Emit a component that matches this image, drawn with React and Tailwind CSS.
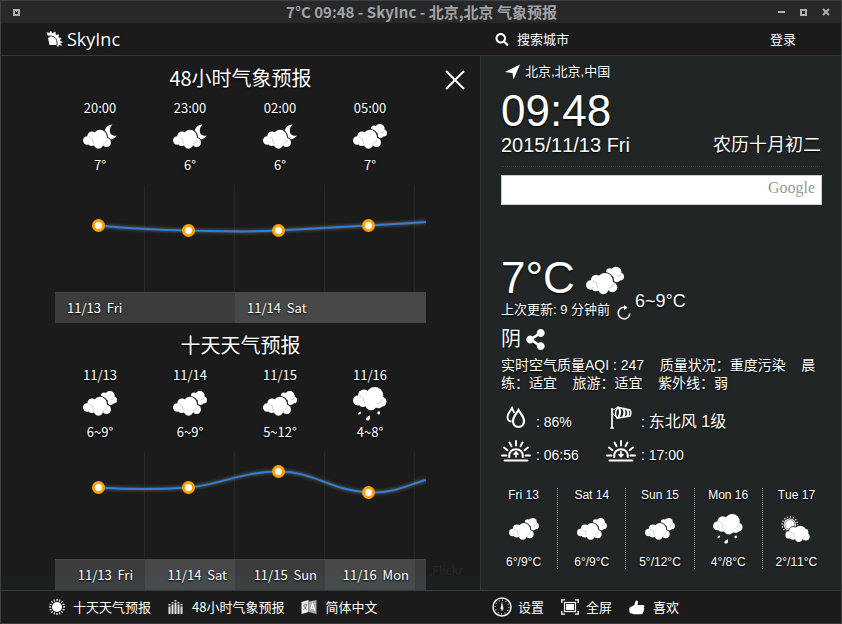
import React from "react";
import { FaSearch, FaShareAlt } from "react-icons/fa";

const CJK = "font-['Noto_Sans_CJK_SC',sans-serif]";
const LATIN = "font-['Liberation_Sans','Noto_Sans_CJK_SC',sans-serif] [font-kerning:none]";
const SHADOW = "[text-shadow:0_1px_2px_#000]";

/* ---------- weather icons ---------- */

function CloudBody({ bg }) {
  const lobes = (
    <>
      <circle cx="23.5" cy="18.5" r="4.5" />
      <circle cx="4.2" cy="16.5" r="4.200" />
      <circle cx="9" cy="12" r="4.600" />
      <circle cx="8.8" cy="18.500" r="3.600" />
      <ellipse cx="15.500" cy="18.800" rx="5" ry="6" />
      <ellipse cx="17" cy="13" rx="7" ry="7.200" />
    </>
  );
  return (
    <>
      <g fill={bg} stroke={bg} strokeWidth="1.800">{lobes}</g>
      <g fill="#fff">{lobes}</g>
      <circle cx="22.500" cy="15.500" r="2.500" fill="#fff" />
      <g fill="none" stroke="#9a9a9a" strokeWidth="0.500">
        <path d="M6 12.500c.6 1.200 1.700 1.800 3 1.800M9.500 14.500c.2 2 .4 4 1.500 5.500M24 15.500c-.2 2-1.700 3.500-3.700 4M20.500 20.500l.6 1.500M5.500 19.500l1-1.200" />
      </g>
    </>
  );
}

function WeatherIcon({ kind, bg = "#1b1b1b", className }) {
  if (kind === "rain") {
    return (
      <svg viewBox="0 0 34 34" className={className} aria-hidden="true">
        <g fill="#fff">
          <circle cx="5" cy="13.500" r="5" />
          <circle cx="11" cy="8.500" r="6" />
          <circle cx="10" cy="15.500" r="4.500" />
          <ellipse cx="18" cy="15.500" rx="6.500" ry="7.800" />
          <circle cx="21.800" cy="8.500" r="8.500" />
          <circle cx="28.500" cy="14.800" r="5" />
          <circle cx="25.500" cy="17.500" r="3.800" />
          <path d="M7.800 24.500c.3 1.500 0 3-1.500 3-1.800 0-1.700-2 1.500-3zM16.800 28.500c.6 2.200.2 5-2 5-2.800 0-2.600-3.200 2-5zM24.500 24.800l2.300-.5c.5 1.400.2 3.200-1 3.200-1.300 0-1.800-1.300-1.300-2.700z" />
        </g>
        <path
          d="M6.500 8c.8 1.600 2 2.200 3.500 2.200M10.500 11c.2 2.500.6 5 2 6.500M29 12c-.8 2.500-2.500 4.200-5 4.700M6.500 17l1-1"
          fill="none"
          stroke="#9a9a9a"
          strokeWidth="0.500"
        />
      </svg>
    );
  }
  if (kind === "sunny") {
    return (
      <svg viewBox="0 0 34 29" className={className} aria-hidden="true">
        <circle cx="10" cy="9.500" r="8.700" fill="none" stroke="#fff" strokeWidth="1.600" strokeDasharray="1.300 2.100" />
        <circle cx="10" cy="9.500" r="7" fill="#fff" />
        <circle cx="10" cy="9.500" r="5.600" fill="none" stroke="#555" strokeWidth="0.800" />
        <g transform="translate(5 5) scale(.98)">
          <CloudBody bg={bg} />
          <circle cx="22.500" cy="13.500" r="4" fill="#fff" />
        </g>
      </svg>
    );
  }
  return (
    <svg viewBox="0 0 34 25" className={className} aria-hidden="true">
      {kind === "night" ? (
        <path d="M29.500.5C25.500.5 21.500 4 21.500 8.500c1.500 0 4 4 3.500 6.500 3.500 1.200 7-.5 9-3.500-4.500.8-7.200-1.300-7.200-4.800 0-2.500 1-4.500 2.700-6.200z" fill="#fff" />
      ) : (
        <g fill="#fff">
          <circle cx="21" cy="4.500" r="3" />
          <circle cx="26.800" cy="5" r="4.900" />
          <circle cx="30.500" cy="9" r="3.500" />
          <circle cx="27.500" cy="11" r="3" />
          <path d="M28 8.500c1.500 0 3-.5 3.600-1.700" fill="none" stroke="#9a9a9a" strokeWidth="0.600" />
        </g>
      )}
      <CloudBody bg={bg} />
    </svg>
  );
}

/* ---------- interface icons ---------- */

function LogoMark() {
  return (
    <svg viewBox="0 0 18 18" className="h-[18px] w-[18px]" aria-hidden="true">
      <path d="M2 8c3-2 6.500-1.500 8 .5 1.300 2 1 4.500 0 6.500L3.500 15z" fill="#fff" />
      <path d="M1.500 5C7 3 13.500 6 12.500 15" fill="none" stroke="#fff" strokeWidth="1.800" />
      <path d="M1.500 4 .5 2l2.700 1L5 .8l1.200 2.400L9.500 1.500 9.800 5 13 4.200 12.500 7.500l3 .5-1.700 2.500L17 12.500l-3 .5 2.500 2.800-3.500-.8-1 2.200-1.300-2" fill="#fff" />
      <path d="M1.500 6.700C7 4.500 12 8 11 15" fill="none" stroke="#1b1b1b" strokeWidth="0.900" />
    </svg>
  );
}

function SunIcon() {
  const rays = Array.from({ length: 16 }, (_, i) => i * 22.5);
  return (
    <svg viewBox="0 0 16 16" className="h-4 w-4" fill="#fff" aria-hidden="true">
      <circle cx="8" cy="8" r="5" />
      {rays.map((a) => (
        <rect key={a} x="7.400" y="0" width="1.200" height="2" transform={`rotate(${a} 8 8)`} />
      ))}
    </svg>
  );
}

function BarsIcon() {
  const bars = [[0.5, 6], [3.500, 4], [6.500, 2], [9.500, 4], [12.500, 6]];
  return (
    <svg viewBox="0 0 16 16" className="h-4 w-4" fill="#e4e4e4" aria-hidden="true">
      {bars.map(([x, y]) => (
        <g key={x}>
          <rect x={x} y={y + 1.500} width="2" height={13.500 - y} />
          <rect x={x} y={y - 1} width="2" height="1.400" />
        </g>
      ))}
    </svg>
  );
}

function TranslateIcon() {
  return (
    <svg viewBox="0 0 16 16" className="h-4 w-4" aria-hidden="true">
      <path d="M.5 3 7.500 1v12L.5 15z" fill="#eee" />
      <path d="M7.500 2.500 15.500 1v14L7.500 13z" fill="#aaa" />
      <path d="M2 6.500 6 5.500M4 4.500v1.500M5.500 6c-.5 2.500-1.500 4-3.300 5M2.700 7c.6 1.500 1.700 2.700 3 3.300" fill="none" stroke="#777" strokeWidth="0.900" />
      <path d="m9.300 11 2.200-6.500 2.500 7.200M10 9.200l3.200.4" fill="none" stroke="#fff" strokeWidth="1.200" />
    </svg>
  );
}

function GaugeIcon() {
  return (
    <svg viewBox="0 0 20 20" className="h-5 w-5" fill="none" stroke="#f2f2f2" aria-hidden="true">
      <circle cx="10" cy="10" r="9" strokeWidth="1.500" />
      <circle cx="10" cy="10" r="6.800" strokeWidth="1.300" strokeDasharray="0.800 2.760" />
      <path d="m10 4.500 1.300 6.200a1.400 1.400 0 1 1-2.600 0z" fill="#f2f2f2" stroke="none" />
      <path d="M10 12v2" strokeWidth="0.800" />
    </svg>
  );
}

function FullscreenIcon() {
  return (
    <svg viewBox="0 0 18 16" className="h-4 w-[18px]" fill="none" stroke="#fff" aria-hidden="true">
      <rect x="3.500" y="3.500" width="11" height="9" strokeWidth="1.200" />
      <rect x="5" y="5" width="8" height="6" fill="#fff" stroke="none" />
      <path d="M.8 4V.8H4M14 .8h3.200V4M17.200 12v3.200H14M4 15.200H.8V12" strokeWidth="1.300" />
    </svg>
  );
}

function ThumbIcon() {
  return (
    <svg viewBox="0 0 16 15" className="h-[15px] w-4" fill="#fff" aria-hidden="true">
      <path d="M1 7 3.500 6.300 5.500 4.500 6.500 1.200C7.300 0 9.200.6 9 2.300L8.500 5H14c1.600 0 1.800 2.200.6 2.600 1 .5.900 2.100-.1 2.500.7.700.4 1.900-.6 2.200.2 1.200-.5 1.900-1.600 1.900H5L1 13C0 11.500 0 8.500 1 7z" />
    </svg>
  );
}

function DropsIcon() {
  return (
    <svg viewBox="0 0 20 23" className="h-[23px] w-5" fill="none" stroke="#fff" aria-hidden="true">
      <path d="M12.500 4c2.200 4 5.500 7 5.500 11 0 3.500-2.300 6-5.500 6S7 18.500 7 15c0-4 3.300-7 5.500-11z" strokeWidth="2.200" />
      <path d="M8.500 7C7.500 5.500 6.500 3.500 6 2 4.500 5 1.500 7.500 1.500 11c0 2.500 1.500 4.300 4 4.500" strokeWidth="1.800" />
    </svg>
  );
}

function WindsockIcon() {
  return (
    <svg viewBox="0 0 22 23" className="h-[23px] w-[22px]" fill="none" stroke="#fff" aria-hidden="true">
      <path d="M2 2v20M.3 22h3.500" strokeWidth="1.700" />
      <path d="M2.500 4.500 7 1.500M2.500 7 6 11" strokeWidth="0.900" />
      <path d="M8 1.200 20 4q1.800 3 0 6L7 12.200Q3.500 7 8 1.200z" strokeWidth="1.500" />
      <path d="M8.500 1.500Q12 6 8 12M13 2.500q3 4 0 8.500M17 3.500q2.500 3.500 0 7" strokeWidth="2" />
    </svg>
  );
}

function HorizonIcon({ down }) {
  return (
    <svg viewBox="0 0 30 22" className="h-[22px] w-[30px]" fill="none" stroke="#fff" strokeWidth="1.900" strokeLinecap="round" aria-hidden="true">
      <path d="M3.500 20.500h23M1 15.500h4.500M24.500 15.500H29M15 1v4.500M8.500 2.500l2 3.700M21.500 2.500l-2 3.700M3 7.500 6.500 10.200M27 7.500 23.500 10.200" />
      <path d="M8.300 17c-1.500-10.500 14.900-10.500 13.400 0" strokeWidth="2" />
      <path d={down ? "M15 11.500v5m-2 -2 2 2.200 2-2.200" : "M15 17v-4.500m-2 1.700 2-2.200 2 2.200"} strokeWidth="1.600" />
    </svg>
  );
}

/* ---------- forecast panel ---------- */

function Chart({ id, path, points }) {
  return (
    <svg viewBox="0 0 371 107" className="h-[107px] w-[371px]" aria-hidden="true">
      <defs>
        <filter id={id} x="-5%" y="-100%" width="110%" height="300%">
          <feGaussianBlur stdDeviation="1.800" />
        </filter>
      </defs>
      {[89.5, 179.5, 269.5, 359.5].map((x) => (
        <path key={x} d={`M${x} 0V107`} stroke="#262626" />
      ))}
      <path d={path} fill="none" stroke="#777" strokeWidth="4" opacity=".5" filter={`url(#${id})`} />
      <path d={path} fill="none" stroke="#2f7ed8" strokeWidth="2" />
      {points.map(([x, y]) => (
        <circle key={x} cx={x} cy={y} r="5" fill="#fff" stroke="#ffa200" strokeWidth="3" />
      ))}
    </svg>
  );
}

function Forecast({ title, items, chart, children }) {
  return (
    <section className="w-[371px]">
      <h2 className="h-[42px] pt-[7px] text-center text-[20px] leading-[30px]">{title}</h2>
      <ul className="grid grid-cols-[repeat(4,90px)] text-center text-[13px] leading-5">
        {items.map(([label, kind, temp]) => (
          <li key={label} className="flex flex-col items-center">
            <span>{label}</span>
            <span className="flex h-[37px] items-center">
              <WeatherIcon kind={kind} className={kind === "rain" ? "h-[34px] w-[34px]" : "h-[25px] w-[34px]"} />
            </span>
            <span>{temp}</span>
          </li>
        ))}
      </ul>
      <div className="pt-[10px]">{chart}</div>
      <div className="flex h-[31px] border-t border-white/20 text-[13px] leading-[29px]">{children}</div>
    </section>
  );
}

const hourly = [
  ["20:00", "night", "7°"],
  ["23:00", "night", "6°"],
  ["02:00", "night", "6°"],
  ["05:00", "cloudy", "7°"],
];
const daily = [
  ["11/13", "cloudy", "6~9°"],
  ["11/14", "cloudy", "6~9°"],
  ["11/15", "cloudy", "5~12°"],
  ["11/16", "rain", "4~8°"],
];
const week = [
  ["Fri 13", "cloudy", "6°/9°C"],
  ["Sat 14", "cloudy", "6°/9°C"],
  ["Sun 15", "cloudy", "5°/12°C"],
  ["Mon 16", "rain", "4°/8°C"],
  ["Tue 17", "sunny", "2°/11°C"],
];
const PANEL = "#212525";

function ForecastPanel() {
  return (
    <section className="relative flex min-w-0 flex-1 gap-[18px] overflow-hidden border-r border-[#343838] bg-[linear-gradient(to_top,#1a1f1f_14px,#1b1b1b_14px)] pl-[54px]">
      <span className="absolute bottom-[11px] left-[428px] text-[12px] leading-[18px] text-[#272727] [text-shadow:none]">,Flickr</span>
      <div>
        <Forecast
          title="48小时气象预报"
          items={hourly}
          chart={
            <Chart
              id="glow-hours"
              path="M43.500 40.500C75 43.500 105 45 133.500 45.500S190 47.500 223.500 45.500 280 42.500 313.500 40.500 350 38.500 371 37"
              points={[[43.500, 40.500], [133.500, 45.500], [223.500, 45.500], [313.500, 40.500]]}
            />
          }
        >
          <span className="w-[180px] bg-white/15 pl-3">11/13&nbsp; Fri</span>
          <span className="flex-1 bg-white/20 pl-3">11/14&nbsp; Sat</span>
        </Forecast>
        <Forecast
          title="十天天气预报"
          items={daily}
          chart={
            <Chart
              id="glow-days"
              path="M43.500 35.500C75 37.500 105 37.500 133.500 35.500 165 33 185 20 223.500 19.500 260 19.500 275 38.500 313.500 40.500 340 41.500 352 33 371 28"
              points={[[43.500, 35.500], [133.500, 35.500], [223.500, 19.500], [313.500, 40.500]]}
            />
          }
        >
          <span className="w-[90px] bg-white/15 pr-3 text-right">11/13&nbsp; Fri</span>
          <span className="w-[90px] bg-white/20 pr-2 text-right">11/14&nbsp; Sat</span>
          <span className="w-[90px] bg-white/15 pr-2 text-right">11/15&nbsp; Sun</span>
          <span className="w-[90px] bg-white/20 pr-1.5 text-right">11/16&nbsp; Mon</span>
          <span className="flex-1 bg-white/15" />
        </Forecast>
      </div>
      <button type="button" aria-label="关闭" className="mt-[13px] h-[22px] w-[22px]">
        <svg viewBox="0 0 22 22" className="h-[22px] w-[22px]" fill="none" stroke="#fff" strokeWidth="2" aria-hidden="true">
          <path d="m2 2 18 18M20 2 2 20" />
        </svg>
      </button>
    </section>
  );
}

/* ---------- current conditions panel ---------- */

function Metric({ icon, label, children }) {
  return (
    <div className="flex h-[33px] items-center gap-[5px]">
      <dt aria-label={label} className="flex w-[30px] justify-center">{icon}</dt>
      <dd className="pt-[9px] leading-5">{children}</dd>
    </div>
  );
}

function CurrentPanel() {
  return (
    <section className={`w-[360px] shrink-0 bg-[#212525] pl-5 pr-[19px] ${LATIN}`}>
      <div className="flex items-center gap-1 pl-[3px] pt-1.5 text-[13px] leading-5">
        <svg viewBox="0 0 17 16" className="h-4 w-[17px]" fill="#fff" aria-hidden="true">
          <path d="M16 .5 9.500 15.500 8.500 9 1 8z" />
        </svg>
        北京,北京,中国
      </div>
      <div className="pt-[7px] text-[44px] leading-[44px]">09:48</div>
      <div className="flex items-center justify-between pr-px leading-6">
        <span className="text-[20px]">2015/11/13 Fri</span>
        <span className="text-[18px]">农历十月初二</span>
      </div>
      <div className="mt-[9px] border-b border-dotted border-[#3b4040]" />
      <div className="relative mt-2 h-[30px]">
        <input
          type="search"
          aria-label="Google"
          className="block h-full w-full border border-[#ccc] bg-white px-2 pr-16 text-[14px] text-black outline-none"
        />
        <span className="pointer-events-none absolute right-[7px] top-[3px] font-['Liberation_Serif',serif] text-[16px] leading-5 text-[#999] [text-shadow:none]">Google</span>
      </div>

      <div className="mt-12 flex gap-[3px]">
        <div>
          <div className="flex h-[50px] items-center gap-[11px]">
            <span className="text-[44px] leading-[50px]">7°C</span>
            <WeatherIcon kind="cloudy" bg={PANEL} className="mt-1 h-[29px] w-[38px]" />
          </div>
          <div className="flex gap-1.5 text-[13px] leading-[14px]">
            上次更新: 9 分钟前
            <button type="button" aria-label="刷新" className="mt-0.5">
              <svg viewBox="0 0 16 16" className="h-4 w-4" fill="none" stroke="#fff" strokeWidth="1.500" aria-hidden="true">
                <path d="M13.800 8.500a5.800 5.800 0 1 1-5.300-6.200" />
                <path d="M8 0v5l3.500-2.300z" fill="#fff" stroke="none" />
              </svg>
            </button>
          </div>
        </div>
        <div className="mt-[37px] text-[18px] leading-[22px]">6~9°C</div>
      </div>
      <div className="flex items-center gap-1 pt-[3px] text-[20px] leading-[30px]">
        阴
        <button type="button" aria-label="分享">
          <FaShareAlt className="h-[21px] w-[21px]" />
        </button>
      </div>
      <p className="mt-0.5 text-[14px] leading-[18px]">
        实时空气质量AQI : 247&nbsp;&nbsp;&nbsp; 质量状况：重度污染&nbsp;&nbsp;&nbsp; 晨练：适宜&nbsp;&nbsp;&nbsp; 旅游：适宜&nbsp;&nbsp;&nbsp; 紫外线：弱
      </p>
      <dl className="mt-[9px] grid grid-cols-[105px_1fr] text-[14px]">
        <Metric icon={<DropsIcon />} label="湿度">: 86%</Metric>
        <Metric icon={<WindsockIcon />} label="风力">: <span className="text-[16px]">东北风 1级</span></Metric>
        <Metric icon={<HorizonIcon />} label="日出">: 06:56</Metric>
        <Metric icon={<HorizonIcon down />} label="日落">: 17:00</Metric>
      </dl>
      <ul className="-ml-[11px] -mr-[9px] mt-[21px] grid grid-cols-5 text-center text-[12px]">
        {week.map(([day, kind, temp]) => (
          <li key={day} className="flex h-[81px] flex-col items-center justify-between border-r border-dotted border-[#8a8d8d] leading-[14px] last:border-r-transparent">
            <span>{day}</span>
            <WeatherIcon
              kind={kind}
              bg={PANEL}
              className={kind === "cloudy" ? "h-[22px] w-[30px]" : kind === "rain" ? "h-[30px] w-[30px]" : "h-[26px] w-[30px]"}
            />
            <span>{temp}</span>
          </li>
        ))}
      </ul>
    </section>
  );
}

/* ---------- window ---------- */

function FooterButton({ icon, children, className = "" }) {
  return (
    <button type="button" className={`flex items-center ${className}`}>
      {icon}
      {children}
    </button>
  );
}

export default function App() {
  return (
    <div className={`flex min-h-screen flex-col border border-[#3c4043] bg-[#1b1b1b] text-white ${CJK} ${SHADOW}`}>
      <header className="flex h-[22px] items-center justify-between bg-[#26282a] px-3 text-[#a3a3a3] [text-shadow:none]">
        <span className="w-[52px]">
          <svg viewBox="0 0 7 7" className="h-[7px] w-[7px]" aria-hidden="true">
            <path d="M0 0h7v7H0zM2 2v3h3V2H4v1H3V2z" fill="#b0b0b0" fillRule="evenodd" />
          </svg>
        </span>
        <h1 className="text-[15px] font-bold leading-[22px]">7°C 09:48 - SkyInc - 北京,北京 气象预报</h1>
        <div className="-mr-px flex items-center gap-[15px]">
          <button type="button" aria-label="最小化" className="h-0.5 w-[7px] bg-[#b0b0b0]" />
          <button type="button" aria-label="最大化" className="h-[7px] w-[7px] border-2 border-[#b0b0b0]" />
          <button type="button" aria-label="关闭窗口">
            <svg viewBox="0 0 8 8" className="h-2 w-2" stroke="#b0b0b0" strokeWidth="2" aria-hidden="true">
              <path d="m1 1 6 6M7 1 1 7" />
            </svg>
          </button>
        </div>
      </header>

      <nav className="flex h-[33px] items-center border-b border-[#343838] pl-[45px] text-[13px]">
        <a href="#home" className="flex flex-1 items-center gap-[3px] font-['Open_Sans','Noto_Sans',sans-serif] text-[18px] leading-6">
          <LogoMark />
          SkyInc
        </a>
        <div className="flex w-[346px] items-center justify-between pr-[45px]">
          <button type="button" className="flex items-center gap-2">
            <FaSearch className="h-[13px] w-[14px]" />
            搜索城市
          </button>
          <button type="button">登录</button>
        </div>
      </nav>

      <main className="flex flex-1">
        <ForecastPanel />
        <CurrentPanel />
      </main>

      <footer className="flex h-[33px] items-center border-t border-[#343838] pl-12 text-[13px]">
        <div className="flex flex-1 items-center gap-[17px]">
          <FooterButton icon={<SunIcon />} className="gap-2">十天天气预报</FooterButton>
          <FooterButton icon={<BarsIcon />} className="gap-2">48小时气象预报</FooterButton>
          <FooterButton icon={<TranslateIcon />} className="gap-2">简体中文</FooterButton>
        </div>
        <div className="flex w-[349px] items-center gap-[17px]">
          <FooterButton icon={<GaugeIcon />} className="gap-1.5">设置</FooterButton>
          <FooterButton icon={<FullscreenIcon />} className="gap-[7px]">全屏</FooterButton>
          <FooterButton icon={<ThumbIcon />} className="gap-2">喜欢</FooterButton>
        </div>
      </footer>
    </div>
  );
}
